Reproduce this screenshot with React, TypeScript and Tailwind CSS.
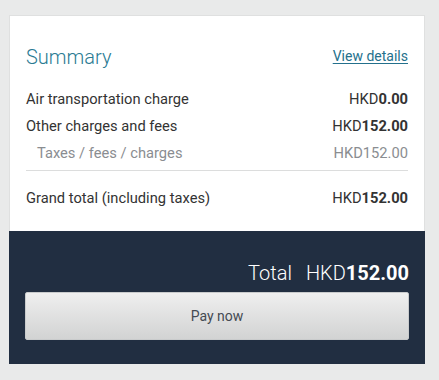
export default function App() {
  const rows = [
    { label: 'Air transportation charge', amount: '0.00' },
    { label: 'Other charges and fees', amount: '152.00' },
  ];

  return (
    <div className="min-h-[380px] w-[439px] bg-[#e9eaea] pt-[15px] pl-[9px] font-['Roboto',_'Liberation_Sans',_sans-serif]">
      <div className="w-[416px]">
        {/* summary */}
        <div className="border border-[#dfe0e0] border-b-0 bg-white px-[16px] pt-[28px] pb-[23px]">
          <div className="flex items-end justify-between">
            <h2 className="text-[20px] font-light leading-[26px] text-[#2b7b93]">Summary</h2>
            <a href="#" className="mb-[3px] text-[14px] text-[#24708c] underline underline-offset-2">
              View details
            </a>
          </div>

          <div className="mt-[20px] space-y-[8px]">
            {rows.map((r) => (
              <div key={r.label} className="flex justify-between text-[14.7px] leading-[19px] text-[#333]">
                <span>{r.label}</span>
                <span>
                  HKD<b className="font-bold">{r.amount}</b>
                </span>
              </div>
            ))}
            <div className="flex justify-between pl-[11px] text-[14.7px] leading-[19px] text-[#8a8d91]">
              <span>Taxes / fees / charges</span>
              <span>HKD152.00</span>
            </div>
          </div>

          <div className="mt-[7px] border-t border-[#dcdddd]" />

          <div className="mt-[18px] flex justify-between text-[14.7px] leading-[19px] text-[#333]">
            <span>Grand total (including taxes)</span>
            <span>
              HKD<b className="font-bold">152.00</b>
            </span>
          </div>
        </div>

        {/* total + pay */}
        <div className="bg-[#212e41] px-[16px] pt-[30px] pb-[24px]">
          <div className="text-right text-[20px] leading-[24px] text-white">
            <span className="font-light">Total</span>
            <span className="ml-[14px] font-light">HKD</span>
            <b className="font-bold">152.00</b>
          </div>
          <button
            type="button"
            className="mt-[7px] flex h-[48px] w-full items-center justify-center rounded-[2px] border border-[#c9cbcc] bg-gradient-to-b from-[#efefef] to-[#d2d3d3] text-[14px] text-[#444a52]"
          >
            Pay now
          </button>
        </div>
      </div>
    </div>
  );
}
